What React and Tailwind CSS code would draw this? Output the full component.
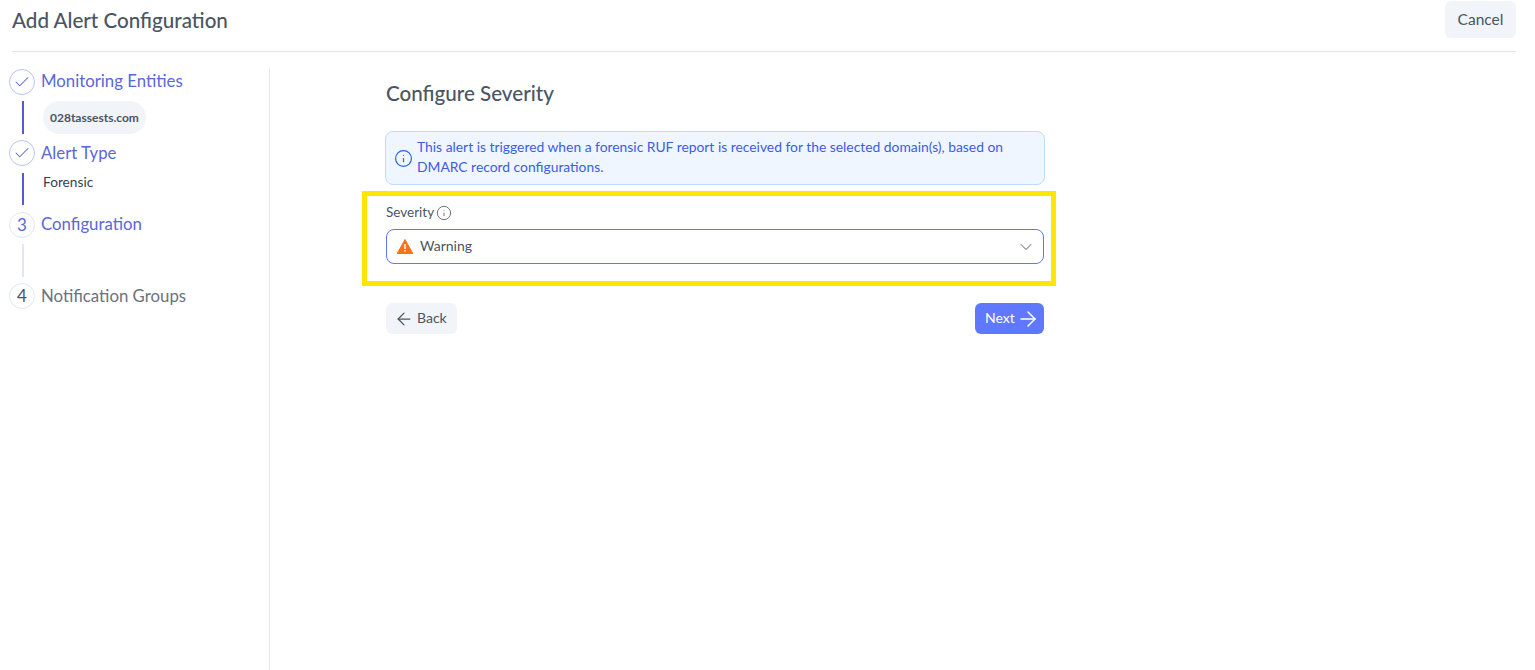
import React from "react";
import { ArrowLeft, ArrowRight, Check, ChevronDown, Info } from "lucide-react";

const font = "font-['Lato','Noto_Sans',sans-serif]";

function StepCircle({ done, label, active }) {
  return (
    <div
      className={`w-[26px] h-[26px] rounded-full border bg-white flex items-center justify-center text-[17px] shrink-0 ${
        done ? "border-[#b9c3fb]" : "border-[#e2e6f2]"
      } ${active ? "text-[#5a67d8]" : "text-[#4b5563]"}`}
    >
      {done ? <Check className="w-[18px] h-[18px] text-[#5a67d8]" strokeWidth={1.4} /> : label}
    </div>
  );
}

function Step({ done, label, title, titleColor, active, lineColor, lineBox, children }) {
  return (
    <div>
      <div className="flex items-center gap-[6px] h-[26px]">
        <StepCircle done={done} label={label} active={active} />
        <span className={`text-[16.8px] ${titleColor}`}>{title}</span>
      </div>
      {lineColor !== undefined && (
        <div className={`flex ${lineBox}`}>
          <div className={`w-[2px] ml-[13px] ${lineColor}`} />
          {children}
        </div>
      )}
    </div>
  );
}

export default function App() {
  return (
    <div className={`h-[670px] bg-white overflow-hidden text-[#4b5563] ${font}`}>
      {/* Top bar */}
      <header className="mx-3 mr-[19px] h-[52px] border-b border-[#e5e7eb] flex justify-between items-start">
        <h1 className="text-[20.6px] mt-[5px] text-[#4b5563] font-medium">Add Alert Configuration</h1>
        <button className="mt-px w-[71px] h-[37px] rounded-md bg-[#f1f4f9] text-[15.5px] text-[#4b5563]">
          Cancel
        </button>
      </header>

      <div className="flex mt-[17px]">
        {/* Steps sidebar */}
        <aside className="w-[270px] h-[601px] border-r border-[#e5e7eb] pl-[9px] shrink-0">
          <Step
            done
            title={<span className="block pb-[2px]">Monitoring Entities</span>}
            titleColor="text-[#5a67d8]"
            lineColor="bg-[#4f5fd0]"
            lineBox="h-[33px] mt-[6px] mb-[6px]"
          >
            <div className="ml-[19px] h-[33px] px-[7px] rounded-full bg-[#f1f4f9] flex items-center text-[12px] font-bold text-[#4b5563]">
              028tassests.com
            </div>
          </Step>
          <Step
            done
            title="Alert Type"
            titleColor="text-[#5a67d8]"
            lineColor="bg-[#4f5fd0]"
            lineBox="h-[32px] mt-[7px] mb-[7px]"
          >
            <div className="ml-[19px] text-[13.7px] text-[#374151] leading-[20px] mt-[-1px]">Forensic</div>
          </Step>
          <Step
            label="3"
            active
            title={<span className="block pb-[2px]">Configuration</span>}
            titleColor="text-[#5a67d8]"
            lineColor="bg-[#e2e6f2]"
            lineBox="h-[33px] mt-[6px] mb-[6px]"
          />
          <Step label="4" title="Notification Groups" titleColor="text-[#6b7280]" />
        </aside>

        {/* Main form */}
        <main className="ml-[92px] w-[694px] shrink-0">
          <div className="pl-[23px] pr-[11px]">
            <h2 className="pl-px text-[20.6px] font-medium text-[#4b5563] mt-[10px] leading-[28px]">Configure Severity</h2>
            <div className="mt-[24px] h-[54px] rounded-lg border border-[#bfdbfe] bg-[#eff6ff] flex items-center pl-[8px] pr-3 gap-[4px] text-[13.85px] leading-[20px] text-[#3b5de7]">
              <Info className="w-[19px] h-[19px] shrink-0 text-[#2563eb]" strokeWidth={1.5} />
              <p className="pb-[2px]">
                This alert is triggered when a forensic RUF report is received for the selected domain(s), based on
                DMARC record configurations.
              </p>
            </div>
          </div>

          {/* Highlighted severity field */}
          <div className="mt-[6px] h-[95px] border-[5px] border-[#ffe600] pl-[19px] pr-[7px] pt-[7px]">
            <div className="flex items-center gap-[2px] text-[13.5px] leading-[18px] text-[#4b5563]">
              Severity
              <Info className="w-[16px] h-[16px] text-[#6b7280] mt-px" strokeWidth={1.5} />
            </div>
            <div className="mt-[8px] h-[35px] rounded-lg border border-[#6078f0] flex items-center pl-[10px] pr-[7px]">
              <svg viewBox="0 0 16 15" className="w-[16px] h-[15px] shrink-0">
                <path d="M8 0.5 L15.8 14.5 H0.2 Z" fill="#f97316" stroke="#f97316" strokeLinejoin="round" />
                <rect x="7.3" y="5" width="1.4" height="5" fill="#fff" />
                <rect x="7.3" y="11" width="1.4" height="1.5" fill="#fff" />
              </svg>
              <span className="ml-[7px] text-[14px] pb-[2px] text-[#4b5563]">Warning</span>
              <ChevronDown className="ml-auto w-[20px] h-[20px] text-[#9ca3af]" strokeWidth={1.3} />
            </div>
          </div>

          <div className="mt-[17px] pl-[24px] pr-[12px] flex justify-between">
            <button className="w-[71px] h-[31px] rounded-md bg-[#f1f4f9] flex items-center pl-[8px] gap-[3px] text-[14px] text-[#4b5563]">
              <ArrowLeft className="w-[20px] h-[20px]" strokeWidth={1.5} />
              <span className="pb-[2px]">Back</span>
            </button>
            <button className="w-[69px] h-[31px] rounded-md bg-[#6078ff] flex items-center pl-[10px] gap-[1px] text-[14px] text-white">
              <span className="pb-[2px]">Next</span>
              <ArrowRight className="w-[24px] h-[24px]" strokeWidth={1.5} />
            </button>
          </div>
        </main>
      </div>
    </div>
  );
}
